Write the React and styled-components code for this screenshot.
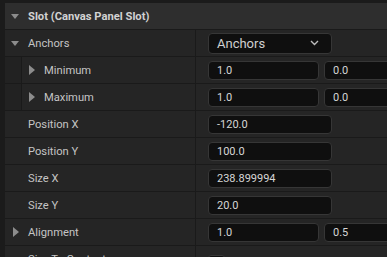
import React from "react";
import styled, { createGlobalStyle } from "styled-components";

const GlobalStyle = createGlobalStyle`
  body {
    margin: 0;
    background: #1b1b1b;
    font-family: Roboto, "Liberation Sans", sans-serif;
    overflow: hidden;
  }
`;

const Panel = styled.div`
  width: 387px;
  height: 257px;
  overflow: hidden;
  padding-top: 3px;
  box-sizing: border-box;
  background: #1b1b1b;
`;

const Body = styled.div`
  border-left: 5px solid #1b1b1b;
  display: flex;
  flex-direction: column;
`;

const Header = styled.div`
  height: 26px;
  background: #2e2e2e;
  border-bottom: 1px solid #1a1a1a;
  display: flex;
  align-items: center;
  padding-left: 6px;
  color: #d2d2d2;
  font-size: 11.2px;
  font-weight: 700;
`;

const Row = styled.div`
  height: 26px;
  display: grid;
  grid-template-columns: 191px 1fr;
  background: #252525;
  border-bottom: 1px solid #1a1a1a;
`;

const NameCell = styled.div`
  display: flex;
  align-items: center;
  height: 100%;
  border-right: 1px solid #1a1a1a;
  color: #c4c4c4;
  font-size: 11.2px;
  padding-left: ${(p) => (p.$nested ? 0 : 6)}px;
`;

const Indent = styled.div`
  width: 16px;
  height: 100%;
  background: #222222;
  border-right: 1px solid #1a1a1a;
  margin-right: 5px;
`;

const ArrowSlot = styled.span`
  width: 17px;
  display: flex;
  align-items: center;
  justify-content: flex-start;
  flex-shrink: 0;
`;

const Down = styled.span`
  width: 0;
  height: 0;
  border-left: 4px solid transparent;
  border-right: 4px solid transparent;
  border-top: 5px solid #8c8c8c;
`;

const Right = styled.span`
  width: 0;
  height: 0;
  margin-left: 2px;
  border-top: 5px solid transparent;
  border-bottom: 5px solid transparent;
  border-left: 6px solid #8c8c8c;
`;

const ValueCell = styled.div`
  display: flex;
  align-items: center;
  gap: 5px;
  padding-left: 12px;
  overflow: hidden;
`;

const Field = styled.div`
  flex: 0 0 ${(p) => p.$w}px;
  height: 19px;
  box-sizing: border-box;
  background: #0f0f0f;
  border: 1px solid #363636;
  border-radius: 4px;
  display: flex;
  align-items: center;
  padding: 0 8px;
  color: #d6d6d6;
  font-size: 11px;
`;

const Dropdown = styled(Field)`
  height: 21px;
  justify-content: space-between;
  padding-right: 12px;
  color: #cfcfcf;
  font-size: 13px;
`;

const Check = styled.div`
  width: 17px;
  height: 17px;
  margin-top: 9px;
  box-sizing: border-box;
  background: #0f0f0f;
  border: 1px solid #363636;
  border-radius: 3px;
`;

const Chevron = () => (
  <svg width="9" height="6" viewBox="0 0 9 6">
    <polyline points="1,1 4.5,4.5 8,1" fill="none" stroke="#bdbdbd" strokeWidth="1.4" />
  </svg>
);

const Name = ({ arrow, nested, children }) => (
  <NameCell $nested={nested}>
    {nested && <Indent />}
    <ArrowSlot>{arrow === "down" ? <Down /> : arrow === "right" ? <Right /> : null}</ArrowSlot>
    <span>{children}</span>
  </NameCell>
);

const single = [
  ["Position X", "-120.0"],
  ["Position Y", "100.0"],
  ["Size X", "238.899994"],
  ["Size Y", "20.0"],
];

export default function App() {
  return (
    <Panel>
      <GlobalStyle />
      <Body>
        <Header>
          <ArrowSlot>
            <Down />
          </ArrowSlot>
          Slot (Canvas Panel Slot)
        </Header>
        <Row>
          <Name arrow="down">Anchors</Name>
          <ValueCell>
            <Dropdown $w={124}>
              Anchors
              <Chevron />
            </Dropdown>
          </ValueCell>
        </Row>
        <Row>
          <Name arrow="right" nested>Minimum</Name>
          <ValueCell>
            <Field $w={111}>1.0</Field>
            <Field $w={111}>0.0</Field>
          </ValueCell>
        </Row>
        <Row>
          <Name arrow="right" nested>Maximum</Name>
          <ValueCell>
            <Field $w={111}>1.0</Field>
            <Field $w={111}>0.0</Field>
          </ValueCell>
        </Row>
        {single.map(([label, value]) => (
          <Row key={label}>
            <Name>{label}</Name>
            <ValueCell>
              <Field $w={124}>{value}</Field>
            </ValueCell>
          </Row>
        ))}
        <Row>
          <Name arrow="right">Alignment</Name>
          <ValueCell>
            <Field $w={111}>1.0</Field>
            <Field $w={111}>0.5</Field>
          </ValueCell>
        </Row>
        <Row>
          <Name>Size To Content</Name>
          <ValueCell>
            <Check />
          </ValueCell>
        </Row>
      </Body>
    </Panel>
  );
}
